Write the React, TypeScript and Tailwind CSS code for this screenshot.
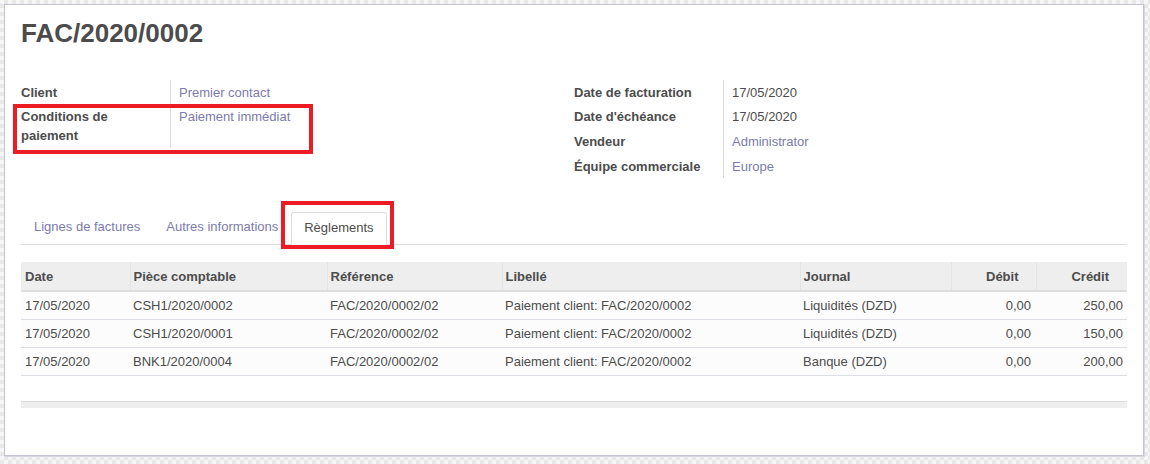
import React from 'react';

interface Field {
  label: string;
  value: string;
  link?: boolean;
  boxed?: boolean;
}

interface Payment {
  date: string;
  move: string;
  ref: string;
  label: string;
  journal: string;
  debit: string;
  credit: string;
}

const leftFields: Field[] = [
  { label: 'Client', value: 'Premier contact', link: true },
  { label: 'Conditions de paiement', value: 'Paiement immédiat', link: true, boxed: true },
];

const rightFields: Field[] = [
  { label: 'Date de facturation', value: '17/05/2020' },
  { label: "Date d'échéance", value: '17/05/2020' },
  { label: 'Vendeur', value: 'Administrator', link: true },
  { label: 'Équipe commerciale', value: 'Europe', link: true },
];

const payments: Payment[] = [
  { date: '17/05/2020', move: 'CSH1/2020/0002', ref: 'FAC/2020/0002/02', label: 'Paiement client: FAC/2020/0002', journal: 'Liquidités (DZD)', debit: '0,00', credit: '250,00' },
  { date: '17/05/2020', move: 'CSH1/2020/0001', ref: 'FAC/2020/0002/02', label: 'Paiement client: FAC/2020/0002', journal: 'Liquidités (DZD)', debit: '0,00', credit: '150,00' },
  { date: '17/05/2020', move: 'BNK1/2020/0004', ref: 'FAC/2020/0002/02', label: 'Paiement client: FAC/2020/0002', journal: 'Banque (DZD)', debit: '0,00', credit: '200,00' },
];

const FieldRow = ({ field }: { field: Field }) => (
  <div className="relative flex">
    <div className="w-[149px] shrink-0 py-[2.8px] pr-3 font-bold leading-[19px]">{field.label}</div>
    <div className={`border-l border-[#dcdcdc] py-[2.8px] pl-2 leading-[19px] ${field.link ? 'text-[#7c7bad]' : ''}`}>
      {field.value}
    </div>
    {field.boxed && (
      <div className="pointer-events-none absolute -left-2 top-[-1px] h-[50px] w-[300px] border-4 border-[#ec1c24]" />
    )}
  </div>
);

const App: React.FC = () => {
  return (
    <div className="h-[464px] w-full bg-[conic-gradient(#e8e8e8_25%,#f6f6f6_0_50%,#e8e8e8_0_75%,#f6f6f6_0)] bg-[length:8px_8px] p-1 font-['Liberation_Sans',Arial,sans-serif] text-[13px] text-[#4c4c4c]">
      <div className="h-[452px] w-[1140px] border border-[#c6c4d2] bg-white px-4 pt-[12px] shadow-[1px_1px_0_#d8d6e0]">
        <h1 className="text-[26px] font-bold leading-8 text-[#4c4c4c]">FAC/2020/0002</h1>

        {/* header fields */}
        <div className="mt-[31px] grid grid-cols-2">
          <div className="flex flex-col">
            {leftFields.map((f) => (
              <FieldRow key={f.label} field={f} />
            ))}
          </div>
          <div className="flex flex-col">
            {rightFields.map((f) => (
              <FieldRow key={f.label} field={f} />
            ))}
          </div>
        </div>

        {/* tabs */}
        <div className="mt-[34px] flex border-b border-[#dddddd]">
          <div className="px-[13px] pb-[6px] pt-[5px] leading-5 text-[#7c7bad]">Lignes de factures</div>
          <div className="px-[13px] pb-[6px] pt-[5px] leading-5 text-[#7c7bad]">Autres informations</div>
          <div className="relative -mb-px rounded-t-[3px] border border-b-white border-[#dddddd] bg-white px-[12px] pb-[6px] pt-[5px] leading-5 text-[#4c4c4c]">
            Règlements
            <div className="pointer-events-none absolute -left-[11px] -top-[12px] h-[48px] w-[113px] border-4 border-[#ec1c24]" />
          </div>
        </div>

        {/* payments table */}
        <table className="mt-[17px] w-full table-fixed border-collapse">
          <colgroup>
            <col className="w-[109px]" />
            <col className="w-[197px]" />
            <col className="w-[175px]" />
            <col className="w-[298px]" />
            <col className="w-[151px]" />
            <col className="w-[85px]" />
            <col className="w-[91px]" />
          </colgroup>
          <thead>
            <tr className="h-[29px] border-b-2 border-[#dddddd] bg-[#eeeeee] font-bold">
              <th className="px-1 text-left">Date</th>
              <th className="border-l border-[#e4e4e4] px-[3px] text-left">Pièce comptable</th>
              <th className="border-l border-[#e4e4e4] px-[3px] text-left">Référence</th>
              <th className="border-l border-[#e4e4e4] px-[3px] text-left">Libellé</th>
              <th className="border-l border-[#e4e4e4] px-[3px] text-left">Journal</th>
              <th className="border-l border-[#e4e4e4] pr-[17px] text-right">Débit</th>
              <th className="border-l border-[#e4e4e4] pr-[18px] text-right">Crédit</th>
            </tr>
          </thead>
          <tbody>
            {payments.map((p) => (
              <tr key={p.move} className="h-[28px] border-b border-[#dedee6] bg-[#fcfcfc]">
                <td className="px-1">{p.date}</td>
                <td className="px-[3px]">{p.move}</td>
                <td className="px-[3px]">{p.ref}</td>
                <td className="px-[3px]">{p.label}</td>
                <td className="px-[3px]">{p.journal}</td>
                <td className="pr-[5px] text-right">{p.debit}</td>
                <td className="pr-1 text-right">{p.credit}</td>
              </tr>
            ))}
            <tr className="h-[26px]">
              <td colSpan={7} />
            </tr>
          </tbody>
          <tfoot>
            <tr className="h-[7px] border-t border-[#dddddd] bg-[#eeeeee]">
              <td colSpan={7} />
            </tr>
          </tfoot>
        </table>
      </div>
    </div>
  );
};

export default App;
